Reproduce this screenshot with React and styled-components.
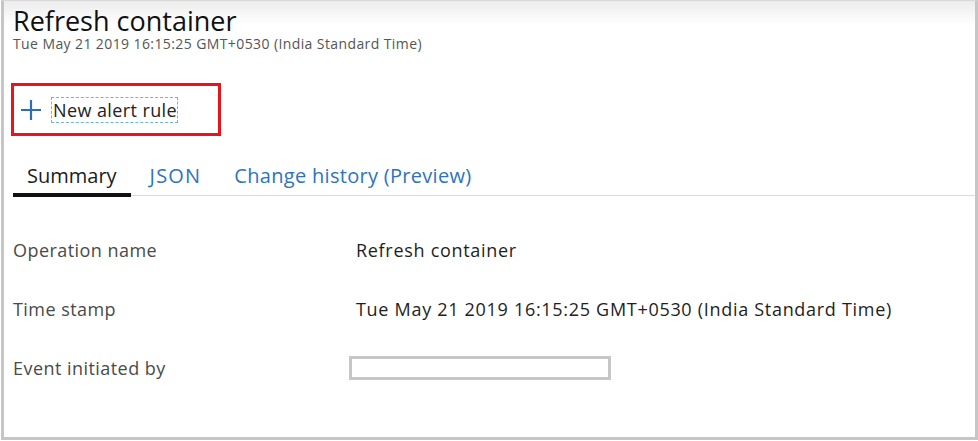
import React from "react";
import styled, { createGlobalStyle } from "styled-components";

const Global = createGlobalStyle`
  html, body { margin: 0; padding: 0; background: #fff; }
  body { font-family: "Open Sans", "Noto Sans", sans-serif; }
`;

const Frame = styled.div`
  box-sizing: border-box;
  width: 977px;
  height: 440px;
  margin-left: 1px;
  border: 3px solid #c6c6c6;
  border-top: 1px solid #d8d8d8;
  background: linear-gradient(#ececec 0px, #ffffff 24px);
  padding: 0 0 0 9px;
  display: flex;
  flex-direction: column;
`;

const Title = styled.h1`
  margin: 5px 0 0 0;
  font-size: 27px;
  font-weight: 400;
  color: #111;
  line-height: 30px;
`;

const Subtitle = styled.div`
  font-size: 14px;
  color: #555;
  line-height: 16px;
  letter-spacing: 0.4px;
`;

const Highlight = styled.div`
  margin-top: 31px;
  margin-left: -2px;
  width: 210px;
  height: 53px;
  box-sizing: border-box;
  border: 3px solid #e8141c;
  display: flex;
  align-items: center;
  padding-left: 6px;
`;

const AddButton = styled.button`
  display: flex;
  align-items: center;
  gap: 10px;
  background: none;
  border: none;
  padding: 0;
  font: inherit;
  cursor: pointer;
`;

const ButtonLabel = styled.span`
  font-size: 18px;
  color: #222;
  outline: 1px dashed #67b8d0;
  padding: 2px 0px 1px 1px;
  letter-spacing: 0.4px;
  line-height: 21px;
`;

const Tabs = styled.div`
  margin-top: 26px;
  display: flex;
  align-items: flex-end;
  border-bottom: 1px solid #dcdcdc;
`;

const Tab = styled.div`
  font-size: 20px;
  line-height: 28px;
  padding: 0 14px 3px 14px;
  margin-right: ${p => (p.$gap ? p.$gap : 0)}px;
  color: ${p => (p.$active ? "#1b1b1b" : "#2c74c0")};
  letter-spacing: ${p => (p.$spacing != null ? p.$spacing : 0.3)}px;
  border-bottom: 4px solid ${p => (p.$active ? "#111" : "transparent")};
  margin-bottom: -2px;
`;

const Rows = styled.div`
  margin-top: 42px;
  display: flex;
  flex-direction: column;
  gap: 36px;
`;

const Row = styled.div`
  display: grid;
  grid-template-columns: 343px 1fr;
  align-items: center;
  height: 23px;
`;

const Label = styled.div`
  font-size: 18px;
  color: #4a4a4a;
  letter-spacing: 0.45px;
`;

const Value = styled.div`
  font-size: 18px;
  color: #1e1e1e;
  letter-spacing: 0.7px;
`;

const EmptyBox = styled.div`
  box-sizing: border-box;
  width: 262px;
  height: 24px;
  margin-left: -7px;
  border: 3px solid #c6c6c6;
`;

const Plus = () => (
  <svg width="22" height="22" viewBox="0 0 22 22">
    <path d="M11 1 V21 M1 11 H21" stroke="#2f6db5" strokeWidth="2.2" fill="none" />
  </svg>
);

export default function App() {
  return (
    <>
      <Global />
      <Frame>
        <Title>Refresh container</Title>
        <Subtitle>Tue May 21 2019 16:15:25 GMT+0530 (India Standard Time)</Subtitle>
        <Highlight>
          <AddButton>
            <Plus />
            <ButtonLabel>New alert rule</ButtonLabel>
          </AddButton>
        </Highlight>
        <Tabs>
          <Tab $active $gap={5} $spacing={0}>Summary</Tab>
          <Tab $gap={5} $spacing={1.2}>JSON</Tab>
          <Tab>Change history (Preview)</Tab>
        </Tabs>
        <Rows>
          <Row>
            <Label>Operation name</Label>
            <Value>Refresh container</Value>
          </Row>
          <Row>
            <Label>Time stamp</Label>
            <Value>Tue May 21 2019 16:15:25 GMT+0530 (India Standard Time)</Value>
          </Row>
          <Row>
            <Label>Event initiated by</Label>
            <EmptyBox />
          </Row>
        </Rows>
      </Frame>
    </>
  );
}
